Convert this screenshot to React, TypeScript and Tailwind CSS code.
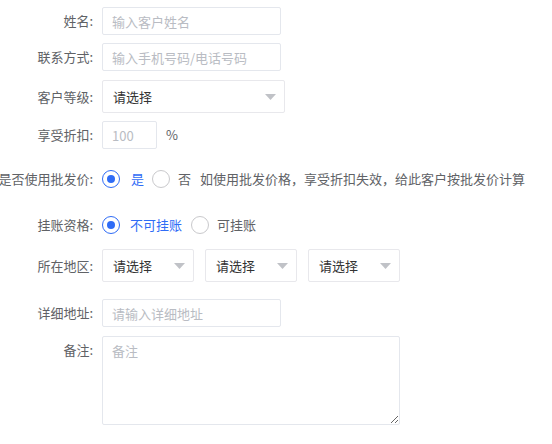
import React from "react";

const font = {
  fontFamily: '"Noto Sans CJK SC", "Noto Sans", sans-serif',
};

function Label({ text, top }: { text: string; top?: boolean }) {
  return (
    <div
      className={`w-[102px] shrink-0 pr-[9px] flex justify-end h-[28px] items-center ${
        top ? "self-start" : ""
      }`}
    >
      <span className="shrink-0 whitespace-nowrap text-[13px] text-[#606266]">
        {text}
      </span>
    </div>
  );
}

function TextInput({ placeholder, w }: { placeholder: string; w: string }) {
  return (
    <input
      className={`${w} h-[28px] border border-[#e4e7ed] rounded-[2px] px-[9px] text-[13px] text-[#333] outline-none placeholder:text-[#b9bcc3]`}
      placeholder={placeholder}
    />
  );
}

function Select({ w }: { w: string }) {
  return (
    <div
      className={`${w} h-[33px] border border-[#e8e8ec] rounded-[2px] flex items-center justify-between pl-[10px] pr-[8px]`}
    >
      <span className="text-[13px] text-[#333]">请选择</span>
      <svg width="11" height="6" viewBox="0 0 11 6">
        <path d="M0 0h11L5.5 6z" fill="#c0c2c7" />
      </svg>
    </div>
  );
}

function Radio({ checked }: { checked?: boolean }) {
  return checked ? (
    <span className="w-[18px] h-[18px] rounded-full border-[1.5px] border-[#2f6cf6] flex items-center justify-center shrink-0">
      <span className="w-[8px] h-[8px] rounded-full bg-[#2f6cf6]" />
    </span>
  ) : (
    <span className="block w-[18px] h-[18px] rounded-full border-[1.5px] border-[#c9c9cc] shrink-0" />
  );
}

export default function App() {
  return (
    <div className="w-[552px] h-[444px] bg-white overflow-hidden pt-[7px]" style={font}>
      <div className="flex items-center">
        <Label text="姓名:" />
        <TextInput w="w-[179px]" placeholder="输入客户姓名" />
      </div>
      <div className="flex items-center mt-[8px]">
        <Label text="联系方式:" />
        <TextInput w="w-[179px]" placeholder="输入手机号码/电话号码" />
      </div>
      <div className="flex items-center mt-[9px]">
        <Label text="客户等级:" />
        <Select w="w-[183px]" />
      </div>
      <div className="flex items-center mt-[8px]">
        <Label text="享受折扣:" />
        <TextInput w="w-[55px]" placeholder="100" />
        <span className="ml-[9px] text-[13px] text-[#606266]">%</span>
      </div>
      <div className="flex items-center mt-[16px] h-[28px]">
        <Label text="是否使用批发价:" />
        <Radio checked />
        <span className="ml-[11px] text-[13px] text-[#2f6cf6]">是</span>
        <span className="ml-[8px]">
          <Radio />
        </span>
        <span className="ml-[8px] text-[13px] text-[#606266]">否</span>
        <span className="ml-[9px] text-[13px] text-[#606266] whitespace-nowrap">
          如使用批发价格，享受折扣失效，给此客户按批发价计算
        </span>
      </div>
      <div className="flex items-center mt-[18px] h-[28px]">
        <Label text="挂账资格:" />
        <Radio checked />
        <span className="ml-[10px] text-[13px] text-[#2f6cf6]">不可挂账</span>
        <span className="ml-[9px]">
          <Radio />
        </span>
        <span className="ml-[8px] text-[13px] text-[#606266]">可挂账</span>
      </div>
      <div className="flex items-center mt-[10px]">
        <Label text="所在地区:" />
        <div className="flex gap-[11px]">
          <Select w="w-[92px]" />
          <Select w="w-[92px]" />
          <Select w="w-[92px]" />
        </div>
      </div>
      <div className="flex items-center mt-[17px]">
        <Label text="详细地址:" />
        <TextInput w="w-[179px]" placeholder="请输入详细地址" />
      </div>
      <div className="flex mt-[9px]">
        <Label text="备注:" top />
        <textarea
          className="w-[298px] h-[89px] border border-[#e4e7ed] rounded-[2px] px-[9px] pt-[5px] text-[13px] leading-[18px] outline-none placeholder:text-[#b9bcc3]"
          placeholder="备注"
        />
      </div>
    </div>
  );
}
